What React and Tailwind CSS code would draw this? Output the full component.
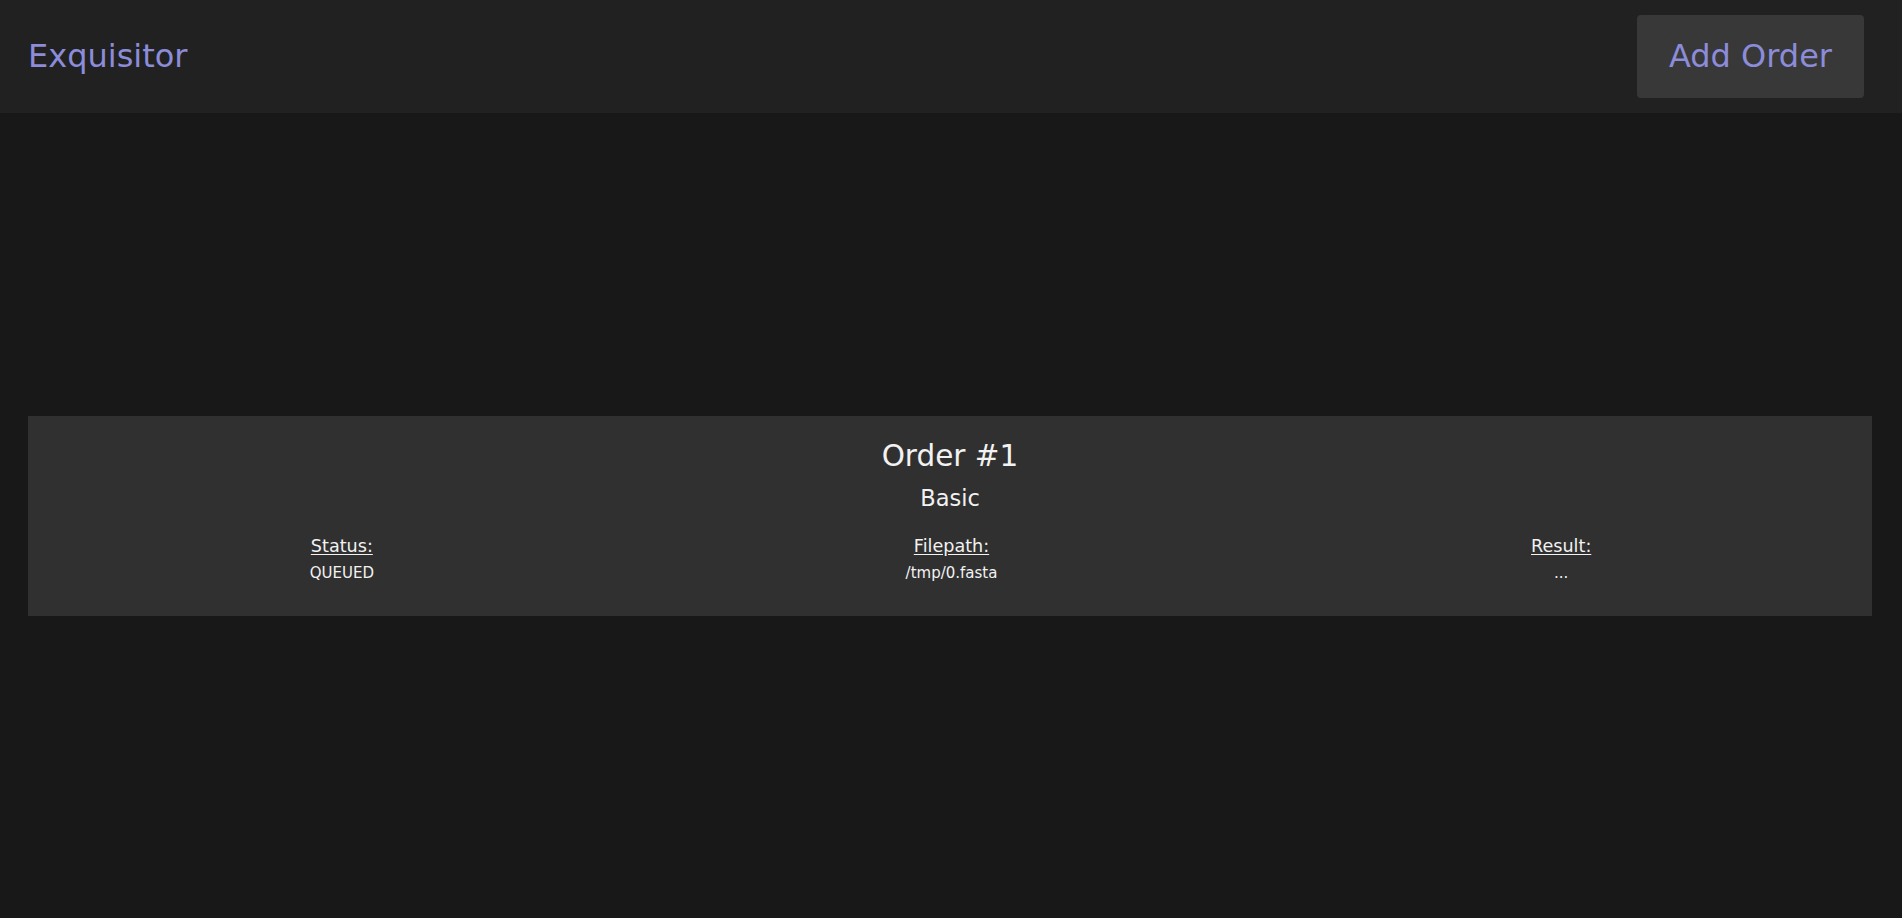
const order = {
  id: 1,
  kind: 'Basic',
  status: 'QUEUED',
  filepath: '/tmp/0.fasta',
  result: '...'
}

function Field({ label, value }) {
  return (
    <div className="flex flex-col items-center">
      <span className="text-[17.6px] leading-[21px] underline underline-offset-2">{label}</span>
      <span className="mt-[7px] text-[15px] leading-[18px]">{value}</span>
    </div>
  )
}

export default function App() {
  return (
    <div
      className="min-h-screen flex flex-col bg-[#181818] text-[#f2f2f2]"
      style={{ fontFamily: '"DejaVu Sans", Verdana, sans-serif' }}
    >
      {/* Header */}
      <header className="h-[113px] shrink-0 flex items-center justify-between bg-[#212121] pl-[28px] pr-[38px]">
        <h1 className="text-[32px] leading-[37px] text-[#8c8cd9]">Exquisitor</h1>
        <button className="h-[83px] px-[32px] rounded-[4px] bg-[#383838] text-[32px] leading-[37px] text-[#8c8cd9]">
          Add Order
        </button>
      </header>

      {/* Orders */}
      <main className="flex-1 flex flex-col justify-center pl-[28px] pr-[30px]">
        <div className="bg-[#303030] pt-[23px] pb-[34px]">
          <h2 className="text-center text-[29.5px] leading-[34px]">Order #{order.id}</h2>
          <p className="mt-[12px] text-center text-[22.5px] leading-[26px]">{order.kind}</p>
          <div className="mt-[25px] grid grid-cols-3 pl-[9px] pr-[6px]">
            <Field label="Status:" value={order.status} />
            <Field label="Filepath:" value={order.filepath} />
            <Field label="Result:" value={order.result} />
          </div>
        </div>
      </main>
    </div>
  )
}
